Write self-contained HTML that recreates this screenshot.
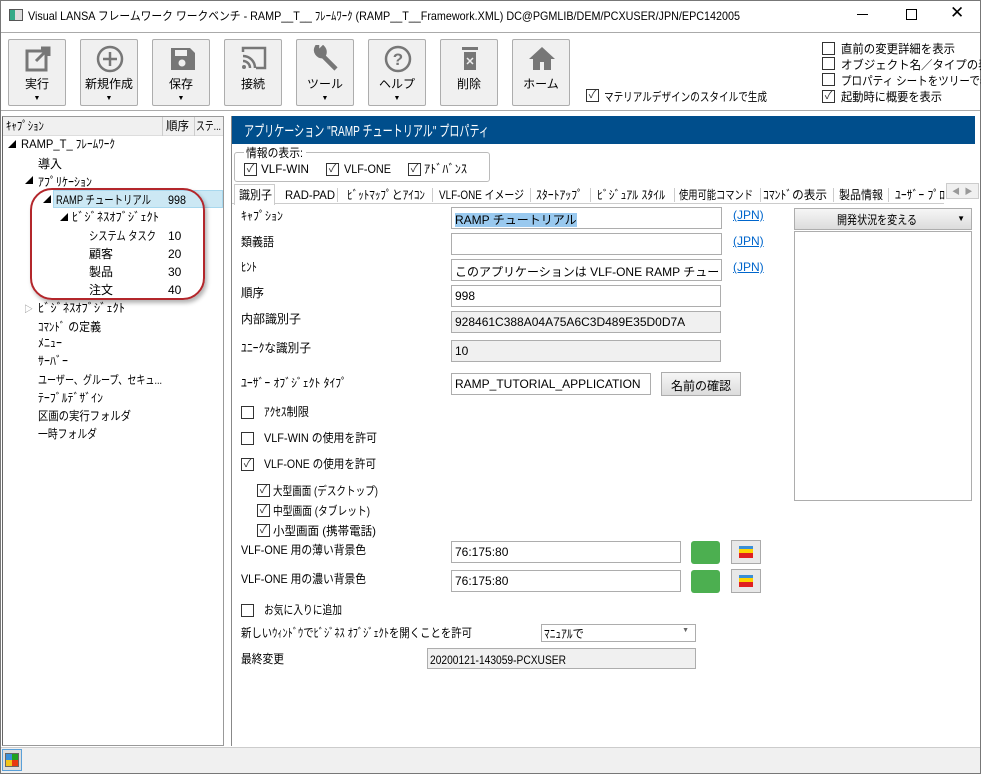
<!DOCTYPE html>
<html><head><meta charset="utf-8"><style>
*{box-sizing:border-box;margin:0;padding:0}
body{width:981px;height:774px;overflow:hidden;background:#fff;font-family:"Liberation Sans","Noto Sans CJK JP",sans-serif;font-size:12px;color:#000;position:relative}
.a{position:absolute;white-space:nowrap}
.btn{position:absolute;top:39px;width:58px;height:67px;border:1px solid #adadad;background:#f0f0f0;border-radius:2px;text-align:center}
.btn svg{position:absolute;left:15px;top:5px}
.btn .d{position:absolute;left:0;right:0;top:55px;font-size:7px}
.cb{position:absolute;width:13px;height:13px;border:1px solid #333;background:#fff;font-size:11px;line-height:11px;text-align:center;color:#333}
.inp{position:absolute;height:22px;border:1px solid #adadad;background:#fff;padding:3px 3px;font-size:12px;white-space:nowrap;overflow:hidden}
.g{background:#f0f0f0}
.lnk{position:absolute;color:#0066cc;text-decoration:underline;font-size:12px}
.sep{position:absolute;top:188px;width:1px;height:14px;background:#ccc}
svg.t{position:absolute;left:0;top:0;width:981px;height:774px;pointer-events:none}
svg.t text{font-family:"Liberation Sans","Noto Sans CJK JP",sans-serif;font-size:12px}
</style></head><body>
<div class="a" style="left:0;top:0;width:981px;height:774px;border:1px solid #777"></div>
<div class="a" style="left:9px;top:9px;width:14px;height:12px;border:1px solid #555;background:linear-gradient(90deg,#3a8 0 40%,#ddd 40%)"></div>
<div class="a" style="left:857px;top:14px;width:11px;height:1px;background:#000"></div>
<div class="a" style="left:906px;top:9px;width:11px;height:11px;border:1px solid #000"></div>
<div class="a" style="left:950px;top:3px;font-size:17px">✕</div>
<div class="a" style="left:1px;top:32px;width:979px;height:1px;background:#aaa"></div>
<!-- toolbar -->
<div class="btn" style="left:8px"><svg width="28" height="28"><rect x="3" y="6" width="19" height="19" fill="none" stroke="#777" stroke-width="3"/><path d="M12 16L24 4M17 3h8v8" stroke="#777" stroke-width="3" fill="none"/></svg><div class="d">▼</div></div>
<div class="btn" style="left:80px"><svg width="28" height="28"><circle cx="14" cy="14" r="12" fill="none" stroke="#777" stroke-width="2.5"/><path d="M14 7v14M7 14h14" stroke="#777" stroke-width="2.5"/></svg><div class="d">▼</div></div>
<div class="btn" style="left:152px"><svg width="28" height="28"><path d="M3 3h19l5 5v17H3z" fill="#777"/><rect x="7" y="5" width="12" height="6" fill="#f0f0f0"/><circle cx="14" cy="18" r="3.5" fill="#f0f0f0"/></svg><div class="d">▼</div></div>
<div class="btn" style="left:224px"><svg width="28" height="28"><path d="M3 7V3h22v20h-9" stroke="#777" stroke-width="2.5" fill="none"/><path d="M3 11a12 12 0 0 1 12 12M3 16a7 7 0 0 1 7 7" stroke="#777" stroke-width="2.5" fill="none"/><circle cx="4" cy="22" r="2" fill="#777"/></svg></div>
<div class="btn" style="left:296px"><svg width="28" height="28"><path d="M24 24L11 11M5 2a6 6 0 0 0 6 9a6 6 0 0 0 0-8l-3 3-3-1z" stroke="#777" stroke-width="4.5" fill="#777"/></svg><div class="d">▼</div></div>
<div class="btn" style="left:368px"><svg width="28" height="28"><circle cx="14" cy="14" r="12" fill="none" stroke="#777" stroke-width="2.5"/><text x="14" y="20" text-anchor="middle" font-size="17" font-weight="bold" fill="#777" font-family="Liberation Sans">?</text></svg><div class="d">▼</div></div>
<div class="btn" style="left:440px"><svg width="28" height="28"><rect x="6" y="2" width="16" height="3" fill="#777"/><rect x="8" y="7" width="12" height="18" fill="#777"/><path d="M11 13l6 6M17 13l-6 6" stroke="#f0f0f0" stroke-width="1.5"/></svg></div>
<div class="btn" style="left:512px"><svg width="28" height="28"><path d="M14 2L1 14h4v11h7v-8h4v8h7V14h4z" fill="#777"/></svg></div>
<div class="cb" style="left:586px;top:89px">✓</div>
<div class="cb" style="left:822px;top:42px"></div>
<div class="cb" style="left:822px;top:57px"></div>
<div class="cb" style="left:822px;top:73px"></div>
<div class="cb" style="left:822px;top:90px">✓</div>
<div class="a" style="left:1px;top:110px;width:979px;height:1px;background:#aaa"></div>
<!-- left panel -->
<div class="a" style="left:2px;top:116px;width:222px;height:630px;border:1px solid #999;border-left-color:#666;background:#fff"></div>
<div class="a" style="left:3px;top:117px;width:220px;height:19px;background:#f0f0f0;border-bottom:1px solid #ddd"></div>
<div class="a" style="left:162px;top:117px;width:1px;height:19px;background:#ccc"></div>
<div class="a" style="left:194px;top:117px;width:1px;height:19px;background:#ccc"></div>
<div class="a" style="left:8px;top:139px;font-size:8px">◢</div>
<div class="a" style="left:25px;top:175px;font-size:8px">◢</div>
<div class="a" style="left:53px;top:190px;width:170px;height:18px;background:#cce8f4;border:1px solid #a8d8ee"></div>
<div class="a" style="left:43px;top:194px;font-size:8px">◢</div>
<div class="a" style="left:60px;top:212px;font-size:8px">◢</div>
<div class="a" style="left:24px;top:302px;font-size:9px;color:#888">▷</div>
<div class="a" style="left:30px;top:188px;width:175px;height:112px;border:2px solid #b3262b;border-radius:22px;box-shadow:2px 3px 4px rgba(0,0,0,.3)"></div>
<!-- right panel -->
<div class="a" style="left:231px;top:116px;width:745px;height:630px;border-left:1px solid #888;background:#fff"></div>
<div class="a" style="left:232px;top:116px;width:743px;height:28px;background:#004e8c"></div>
<div class="a" style="left:234px;top:152px;width:256px;height:30px;border:1px solid #bbb;border-radius:3px"></div>
<div class="a" style="left:244px;top:146px;width:62px;height:12px;background:#fff"></div>
<div class="cb" style="left:244px;top:163px">✓</div>
<div class="cb" style="left:326px;top:163px">✓</div>
<div class="cb" style="left:408px;top:163px">✓</div>
<div class="a" style="left:232px;top:203px;width:712px;height:1px;background:#ccc"></div>
<div class="a" style="left:234px;top:184px;width:41px;height:21px;border:1px solid #ccc;border-bottom:none;background:#fff"></div>
<div class="sep" style="left:337px"></div><div class="sep" style="left:432px"></div><div class="sep" style="left:530px"></div><div class="sep" style="left:590px"></div><div class="sep" style="left:674px"></div><div class="sep" style="left:760px"></div><div class="sep" style="left:833px"></div><div class="sep" style="left:888px"></div>
<div class="a" style="left:946px;top:183px;width:33px;height:16px;border:1px solid #ccc;background:#f0f0f0;font-size:8px;color:#999;padding:2px 5px">◀ &nbsp;▶</div>
<div class="inp" style="left:451px;top:207px;width:271px"><span style="background:#99c9ef">RAMP チュートリアル</span></div><div class="lnk" style="left:733px;top:208px">(JPN)</div>
<div class="inp" style="left:451px;top:233px;width:271px"></div><div class="lnk" style="left:733px;top:234px">(JPN)</div>
<div class="inp" style="left:451px;top:259px;width:271px">このアプリケーションは VLF-ONE RAMP チュートリアル用にの</div><div class="lnk" style="left:733px;top:260px">(JPN)</div>
<div class="inp" style="left:451px;top:285px;width:270px">998</div>
<div class="inp g" style="left:451px;top:311px;width:270px">928461C388A04A75A6C3D489E35D0D7A</div>
<div class="inp g" style="left:451px;top:340px;width:270px">10</div>
<div class="inp" style="left:451px;top:373px;width:200px">RAMP_TUTORIAL_APPLICATION</div>
<div class="a" style="left:661px;top:372px;width:80px;height:24px;border:1px solid #adadad;background:linear-gradient(#f6f6f6,#dcdcdc);text-align:center;padding-top:4px">名前の確認</div>
<div class="cb" style="left:241px;top:406px"></div>
<div class="cb" style="left:241px;top:432px"></div>
<div class="cb" style="left:241px;top:458px">✓</div>
<div class="cb" style="left:257px;top:484px">✓</div>
<div class="cb" style="left:257px;top:504px">✓</div>
<div class="cb" style="left:257px;top:524px">✓</div>
<div class="inp" style="left:451px;top:541px;width:230px">76:175:80</div>
<div class="a" style="left:691px;top:541px;width:29px;height:23px;background:#4caf50;border-radius:3px"></div>
<div class="a" style="left:731px;top:540px;width:30px;height:24px;border:1px solid #aaa;background:#e8e8e8"><div style="margin:5px 7px;width:14px;height:12px;background:linear-gradient(#3a8fd8 0 25%,#ffd400 25% 60%,#e02020 60%)"></div></div>
<div class="inp" style="left:451px;top:570px;width:230px">76:175:80</div>
<div class="a" style="left:691px;top:570px;width:29px;height:23px;background:#4caf50;border-radius:3px"></div>
<div class="a" style="left:731px;top:569px;width:30px;height:24px;border:1px solid #aaa;background:#e8e8e8"><div style="margin:5px 7px;width:14px;height:12px;background:linear-gradient(#3a8fd8 0 25%,#ffd400 25% 60%,#e02020 60%)"></div></div>
<div class="cb" style="left:241px;top:604px"></div>
<div class="inp" style="left:541px;top:624px;width:155px;height:18px"><span style="position:absolute;right:6px;top:2px;font-size:7px;color:#666">▼</span></div>
<div class="inp g" style="left:427px;top:648px;width:269px;height:21px"></div>
<div class="a" style="left:794px;top:208px;width:178px;height:22px;border:1px solid #adadad;background:linear-gradient(#f6f6f6,#dcdcdc)"><span style="position:absolute;right:6px;top:5px;font-size:8px">▼</span></div>
<div class="a" style="left:794px;top:231px;width:178px;height:270px;border:1px solid #adadad"></div>
<div class="a" style="left:1px;top:747px;width:979px;height:26px;background:#f0f0f0;border-top:1px solid #ccc"></div>
<div class="a" style="left:2px;top:749px;width:20px;height:22px;border:1px solid #5aa0d8;background:#ddd"><div style="margin:3px 2px;width:14px;height:14px;border:1px solid #666;background:conic-gradient(#1fa11f 0 25%,#e83a10 25% 50%,#f2c51a 50% 75%,#3a8fd8 75%)"></div></div>

<svg class="t" viewBox="0 0 981 774" xmlns="http://www.w3.org/2000/svg">
<text x="28" y="20" textLength="712" lengthAdjust="spacingAndGlyphs">Visual LANSA フレームワーク ワークベンチ - RAMP__T__ ﾌﾚｰﾑﾜｰｸ (RAMP__T__Framework.XML)   DC@PGMLIB/DEM/PCXUSER/JPN/EPC142005</text>
<text x="37" y="88" text-anchor="middle">実行</text>
<text x="109" y="88" text-anchor="middle">新規作成</text>
<text x="181" y="88" text-anchor="middle">保存</text>
<text x="253" y="88" text-anchor="middle">接続</text>
<text x="325" y="88" text-anchor="middle">ツール</text>
<text x="397" y="88" text-anchor="middle">ヘルプ</text>
<text x="469" y="88" text-anchor="middle">削除</text>
<text x="541" y="88" text-anchor="middle">ホーム</text>
<text x="604" y="101" textLength="163" lengthAdjust="spacingAndGlyphs">マテリアルデザインのスタイルで生成</text>
<text x="841" y="53" textLength="114" lengthAdjust="spacingAndGlyphs">直前の変更詳細を表示</text>
<text x="841" y="69" textLength="160" lengthAdjust="spacingAndGlyphs">オブジェクト名／タイプの表示</text>
<text x="841" y="85" textLength="160" lengthAdjust="spacingAndGlyphs">プロパティ シートをツリーで表示</text>
<text x="841" y="101" textLength="101" lengthAdjust="spacingAndGlyphs">起動時に概要を表示</text>
<text x="6" y="130" textLength="38" lengthAdjust="spacingAndGlyphs" font-size="11">ｷｬﾌﾟｼｮﾝ</text>
<text x="166" y="130" textLength="23" lengthAdjust="spacingAndGlyphs">順序</text>
<text x="196" y="130" textLength="25" lengthAdjust="spacingAndGlyphs">ステ...</text>
<text x="21" y="148" textLength="94" lengthAdjust="spacingAndGlyphs">RAMP_T_ ﾌﾚｰﾑﾜｰｸ</text>
<text x="38" y="168" textLength="24" lengthAdjust="spacingAndGlyphs">導入</text>
<text x="38" y="186" textLength="54" lengthAdjust="spacingAndGlyphs">ｱﾌﾟﾘｹｰｼｮﾝ</text>
<text x="56" y="204" textLength="95" lengthAdjust="spacingAndGlyphs">RAMP チュートリアル</text>
<text x="168" y="204" textLength="18" lengthAdjust="spacingAndGlyphs">998</text>
<text x="72" y="221" textLength="87" lengthAdjust="spacingAndGlyphs">ﾋﾞｼﾞﾈｽｵﾌﾞｼﾞｪｸﾄ</text>
<text x="89" y="240" textLength="67" lengthAdjust="spacingAndGlyphs">システム タスク</text><text x="168" y="240">10</text>
<text x="89" y="258" textLength="24" lengthAdjust="spacingAndGlyphs">顧客</text><text x="168" y="258">20</text>
<text x="89" y="276" textLength="24" lengthAdjust="spacingAndGlyphs">製品</text><text x="168" y="276">30</text>
<text x="89" y="294" textLength="24" lengthAdjust="spacingAndGlyphs">注文</text><text x="168" y="294">40</text>
<text x="38" y="312" textLength="87" lengthAdjust="spacingAndGlyphs">ﾋﾞｼﾞﾈｽｵﾌﾞｼﾞｪｸﾄ</text>
<text x="38" y="331" textLength="63" lengthAdjust="spacingAndGlyphs">ｺﾏﾝﾄﾞ の定義</text>
<text x="38" y="347" textLength="24" lengthAdjust="spacingAndGlyphs">ﾒﾆｭｰ</text>
<text x="38" y="365" textLength="30" lengthAdjust="spacingAndGlyphs">ｻｰﾊﾞｰ</text>
<text x="38" y="384" textLength="124" lengthAdjust="spacingAndGlyphs">ユーザー、グループ、セキュ...</text>
<text x="38" y="402" textLength="65" lengthAdjust="spacingAndGlyphs">ﾃｰﾌﾞﾙﾃﾞｻﾞｲﾝ</text>
<text x="38" y="420" textLength="93" lengthAdjust="spacingAndGlyphs">区画の実行フォルダ</text>
<text x="38" y="438" textLength="59" lengthAdjust="spacingAndGlyphs">一時フォルダ</text>
<text x="244" y="136" fill="#fff" font-size="15" textLength="245" lengthAdjust="spacingAndGlyphs" style="font-size:15px">アプリケーション "RAMP チュートリアル" プロパティ</text>
<text x="246" y="157" textLength="57" lengthAdjust="spacingAndGlyphs">情報の表示:</text>
<text x="261" y="173" textLength="48" lengthAdjust="spacingAndGlyphs">VLF-WIN</text>
<text x="344" y="173" textLength="47" lengthAdjust="spacingAndGlyphs">VLF-ONE</text>
<text x="424" y="173" textLength="43" lengthAdjust="spacingAndGlyphs">ｱﾄﾞﾊﾞﾝｽ</text>
<text x="239" y="199" textLength="33" lengthAdjust="spacingAndGlyphs">識別子</text>
<text x="285" y="199" textLength="50" lengthAdjust="spacingAndGlyphs">RAD-PAD</text>
<text x="347" y="199" textLength="78" lengthAdjust="spacingAndGlyphs">ﾋﾞｯﾄﾏｯﾌﾟとｱｲｺﾝ</text>
<text x="439" y="199" textLength="85" lengthAdjust="spacingAndGlyphs">VLF-ONE イメージ</text>
<text x="536" y="199" textLength="47" lengthAdjust="spacingAndGlyphs">ｽﾀｰﾄｱｯﾌﾟ</text>
<text x="597" y="199" textLength="68" lengthAdjust="spacingAndGlyphs">ﾋﾞｼﾞｭｱﾙ ｽﾀｲﾙ</text>
<text x="679" y="199" textLength="74" lengthAdjust="spacingAndGlyphs">使用可能コマンド</text>
<text x="763" y="199" textLength="64" lengthAdjust="spacingAndGlyphs">ｺﾏﾝﾄﾞの表示</text>
<text x="839" y="199" textLength="44" lengthAdjust="spacingAndGlyphs">製品情報</text>
<text x="895" y="199" textLength="50" lengthAdjust="spacingAndGlyphs">ﾕｰｻﾞｰ ﾌﾟﾛ</text>
<text x="241" y="220" textLength="42" lengthAdjust="spacingAndGlyphs">ｷｬﾌﾟｼｮﾝ</text>
<text x="241" y="246" textLength="33" lengthAdjust="spacingAndGlyphs">類義語</text>
<text x="241" y="271" textLength="16" lengthAdjust="spacingAndGlyphs">ﾋﾝﾄ</text>
<text x="241" y="297" textLength="23" lengthAdjust="spacingAndGlyphs">順序</text>
<text x="241" y="323" textLength="60" lengthAdjust="spacingAndGlyphs">内部識別子</text>
<text x="241" y="352" textLength="70" lengthAdjust="spacingAndGlyphs">ﾕﾆｰｸな識別子</text>
<text x="241" y="387" textLength="106" lengthAdjust="spacingAndGlyphs">ﾕｰｻﾞｰ ｵﾌﾞｼﾞｪｸﾄ ﾀｲﾌﾟ</text>
<text x="264" y="416" textLength="45" lengthAdjust="spacingAndGlyphs">ｱｸｾｽ制限</text>
<text x="264" y="442" textLength="113" lengthAdjust="spacingAndGlyphs">VLF-WIN の使用を許可</text>
<text x="264" y="468" textLength="112" lengthAdjust="spacingAndGlyphs">VLF-ONE の使用を許可</text>
<text x="273" y="495" textLength="105" lengthAdjust="spacingAndGlyphs">大型画面 (デスクトップ)</text>
<text x="273" y="515" textLength="97" lengthAdjust="spacingAndGlyphs">中型画面 (タブレット)</text>
<text x="273" y="535" textLength="103" lengthAdjust="spacingAndGlyphs">小型画面 (携帯電話)</text>
<text x="241" y="554" textLength="125" lengthAdjust="spacingAndGlyphs">VLF-ONE 用の薄い背景色</text>
<text x="241" y="583" textLength="125" lengthAdjust="spacingAndGlyphs">VLF-ONE 用の濃い背景色</text>
<text x="264" y="614" textLength="78" lengthAdjust="spacingAndGlyphs">お気に入りに追加</text>
<text x="241" y="637" textLength="231" lengthAdjust="spacingAndGlyphs">新しいｳｨﾝﾄﾞｳでﾋﾞｼﾞﾈｽ ｵﾌﾞｼﾞｪｸﾄを開くことを許可</text>
<text x="544" y="638" textLength="40" lengthAdjust="spacingAndGlyphs">ﾏﾆｭｱﾙで</text>
<text x="241" y="663" textLength="43" lengthAdjust="spacingAndGlyphs">最終変更</text>
<text x="430" y="664" textLength="136" lengthAdjust="spacingAndGlyphs">20200121-143059-PCXUSER</text>
<text x="837" y="224" textLength="80" lengthAdjust="spacingAndGlyphs">開発状況を変える</text>
</svg>
</body></html>
